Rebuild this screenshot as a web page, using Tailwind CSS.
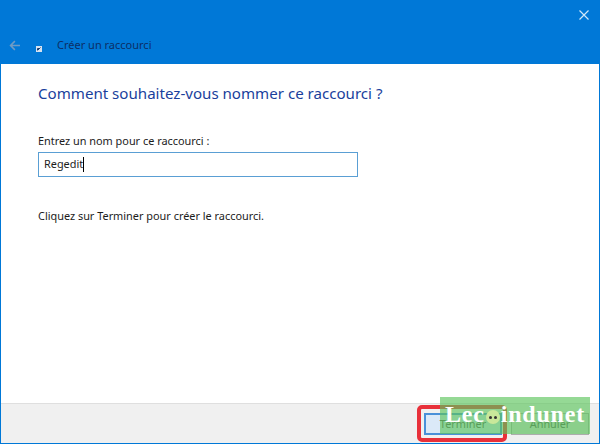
<!DOCTYPE html>
<html lang="fr">
<head>
  <meta charset="UTF-8" />
  <title>Créer un raccourci</title>
  <script src="https://cdn.jsdelivr.net/npm/@tailwindcss/browser@4"></script>
</head>
<body class="bg-white">
<div class="relative w-[600px] h-[444px] overflow-hidden flex flex-col bg-white border-x border-b border-[#0078d7] font-['Noto_Sans',sans-serif] text-[#1c1c1c]">

  <!-- Title bar -->
  <header class="h-[64px] shrink-0 -mx-px bg-[#0078d7] relative flex items-end pb-[10px]">
    <svg class="ml-[9px] mb-[3px] w-[11px] h-[11px]" viewBox="0 0 14 14" fill="none" stroke="#6f9bc4" stroke-width="2">
      <path d="M14 7H2M7.500 1.500L2 7l5.500 5.500" />
    </svg>
    <svg class="ml-[16px] mb-[2px] w-[6px] h-[6px]" viewBox="0 0 6 6">
      <rect width="6" height="6" fill="#d5e2f0" />
      <path d="M1.500 4.500V2.500h2M2 4l2.500-2.500" stroke="#1c3f70" stroke-width="1" fill="none" />
    </svg>
    <span class="ml-[15px] text-[11px] leading-[18px] text-[#0c2f66]">Créer un raccourci</span>
    <svg class="absolute right-[11px] top-[10px] w-[10px] h-[10px]" viewBox="0 0 10 10" stroke="#cfe6f8" stroke-width="1.2">
      <path d="M0.500 0.500l9 9M9.500 0.500l-9 9" />
    </svg>
  </header>

  <!-- Content -->
  <main class="flex-1 pl-[37px]">
    <h1 class="mt-[19px] text-[15.1px] leading-[20px] text-[#1a3f9c]">Comment souhaitez-vous nommer ce raccourci ?</h1>
    <p class="mt-[30px] text-[10.9px] leading-[16px]">Entrez un nom pour ce raccourci :</p>
    <div class="mt-[3px] w-[320px] h-[25px] border border-[#5a9fd4] pl-[5px] flex items-center text-[10.9px]">
      <span>Regedit</span><span class="w-px h-[15px] bg-black"></span>
    </div>
    <p class="mt-[31px] text-[10.9px] leading-[16px]">Cliquez sur Terminer pour créer le raccourci.</p>
  </main>

  <!-- Footer -->
  <footer class="h-[40px] shrink-0 bg-[#f0f0f0] border-t border-[#dfdfdf] flex justify-end items-center gap-[9px] pr-[10px]">
    <button class="w-[78px] h-[22px] pt-[2px] leading-none bg-[#dbe9f8] border-2 border-[#4a90d9] text-[10.9px] text-[#555]">Terminer</button>
    <button class="w-[78px] h-[22px] pt-[2px] leading-none bg-[#e1e1e1] border border-[#adadad] text-[10.9px] text-[#555]">Annuler</button>
  </footer>

  <!-- Red highlight -->
  <div class="absolute left-[416px] top-[405px] w-[90px] h-[37px] border-[4px] border-[#e8303a] rounded-[5px]"></div>

  <!-- Watermark -->
  <div class="absolute left-[439px] top-[397px] w-[150px] h-[37px] pb-[3px] bg-[#5cc45c]/65 flex items-center justify-center font-['Liberation_Serif',serif] text-[24px] font-bold text-white tracking-[0.8px]">
    <span>Lec</span>
    <span class="relative w-[14px] h-[14px] mt-[5px] mx-px rounded-full bg-[#c9e89a]">
      <span class="absolute left-[3px] top-[6px] w-[3px] h-[3px] rounded-full bg-[#333]"></span>
      <span class="absolute left-[8px] top-[6px] w-[3px] h-[3px] rounded-full bg-[#333]"></span>
    </span>
    <span>indunet</span>
  </div>
</div>
</body>
</html>
